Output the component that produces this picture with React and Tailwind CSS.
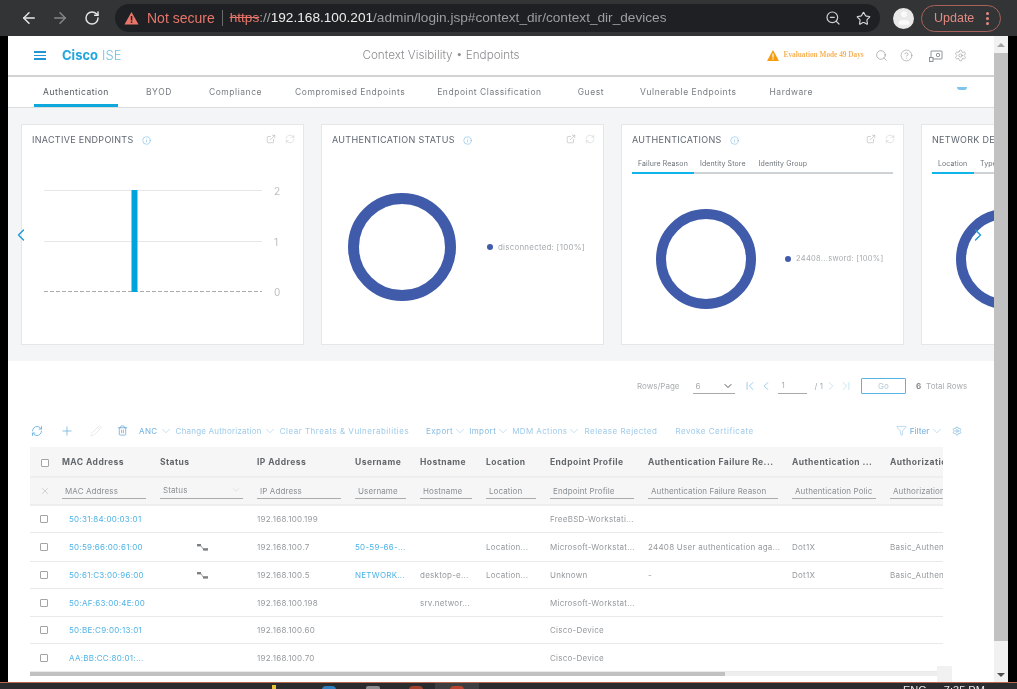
import React from "react";
import { ArrowLeft, ArrowRight, RotateCw, ZoomOut, Star, Search, CircleHelp, Settings, ChevronLeft, ChevronRight, ChevronDown, RefreshCw, Plus, Pencil, Trash2, Filter, X, ExternalLink, ChevronFirst, ChevronLast, Info, User } from "lucide-react";

const font = "font-['Inter','Liberation_Sans',sans-serif]";
const tabs = [["Authentication", ""], ["BYOD", "ml-[28px]"], ["Compliance", "ml-[37px]"], ["Compromised Endpoints", "ml-[33px]"], ["Endpoint Classification", "ml-[32px]"], ["Guest", "ml-[36px]"], ["Vulnerable Endpoints", "ml-[36px]"], ["Hardware", "ml-[33px]"]];
const grid = "grid grid-cols-[32px_98px_97px_98px_65px_66px_64px_98px_144px_98px_53px]";
const heads = ["MAC Address", "Status", "IP Address", "Username", "Hostname", "Location", "Endpoint Profile", "Authentication Failure Re...", "Authentication ...", "Authorizatio"];
const filters = ["MAC Address", "Status", "IP Address", "Username", "Hostname", "Location", "Endpoint Profile", "Authentication Failure Reason", "Authentication Polic", "Authorization"];
const rows = [
  { h: "h-[27px]", c: ["50:31:84:00:03:01", "", "192.168.100.199", "", "", "", "FreeBSD-Workstati...", "", "", ""] },
  { h: "h-[29px]", s: true, c: ["50:59:66:00:61:00", "", "192.168.100.7", "50-59-66-...", "", "Location...", "Microsoft-Workstat...", "24408 User authentication aga...", "Dot1X", "Basic_Authen"] },
  { h: "h-[27px]", s: true, c: ["50:61:C3:00:96:00", "", "192.168.100.5", "NETWORK...", "desktop-e...", "Location...", "Unknown", "-", "Dot1X", "Basic_Authen"] },
  { h: "h-[28px]", c: ["50:AF:63:00:4E:00", "", "192.168.100.198", "", "srv.networ...", "", "Microsoft-Workstat...", "", "", ""] },
  { h: "h-[27px]", c: ["50:BE:C9:00:13:01", "", "192.168.100.60", "", "", "", "Cisco-Device", "", "", ""] },
  { h: "h-[28px]", c: ["AA:BB:CC:80:01:...", "", "192.168.100.70", "", "", "", "Cisco-Device", "", "", ""] },
];

function Box() {
  return <span className="block w-[8px] h-[8px] border border-[#a4a4a4] rounded-[1px] bg-white" />;
}

function Donut({ size, sw = 11 }) {
  const r = size / 2 - sw / 2;
  return (
    <svg width={size} height={size} className="shrink-0">
      <circle cx={size / 2} cy={size / 2} r={r} fill="none" stroke="#3f5ba9" strokeWidth={sw} />
    </svg>
  );
}

function CardHead({ title, icons = true }) {
  return (
    <div className="flex items-center h-[14px] pl-[10px] pr-[8px]">
      <span className="text-[9px] tracking-[0.3px] text-[#5f6670] whitespace-nowrap">{title}</span>
      <Info size={9} strokeWidth={1.4} className="ml-[8px] text-[#6bb4e4] shrink-0" />
      {icons && (
        <div className="ml-auto flex items-center gap-[9px] text-[#a9adb1] -mt-[2px]">
          <ExternalLink size={10} strokeWidth={1.3} />
          <RefreshCw size={10} strokeWidth={1.2} className="text-[#c4c8cb]" />
        </div>
      )}
    </div>
  );
}

function SubTabs({ items, firstW }) {
  return (
    <div className="mx-[10px] mt-[7px] flex h-[20px] border-b-2 border-[#cfd2d4] text-[7px] text-[#6c7278] tracking-[0.1px] whitespace-nowrap">
      {items.map((t, i) => (
        <span key={t} className={i === 0 ? "h-[20px] pl-[6px] pt-[5px] border-b-2 border-[#0fb4e8] " + firstW : "pl-[6px] pr-[7px] pt-[5px]"}>{t}</span>
      ))}
    </div>
  );
}

export default function App() {
  return (
    <div className={"w-[1017px] h-[689px] bg-black overflow-hidden flex flex-col relative blur-[0.45px] " + font}>
      {/* browser chrome */}
      <div className="h-[36px] shrink-0 bg-[#333436] flex items-center pl-[20px] text-[#e6e6e6]">
        <ArrowLeft size={18} strokeWidth={2} />
        <ArrowRight size={18} strokeWidth={2} className="ml-[13px] text-[#85878a]" />
        <RotateCw size={16} strokeWidth={2.2} className="ml-[15px]" />
        <div className="ml-[15px] w-[765px] h-[28px] rounded-full bg-[#1f2023] flex items-center pl-[9px] pr-[9px] font-['Liberation_Sans',sans-serif] text-[13.65px] whitespace-nowrap">
          <svg width="15" height="14" viewBox="0 0 15 14"><path d="M7.5 1 14.5 13.5H.5Z" fill="#e8756a" /><rect x="6.8" y="5" width="1.5" height="4.5" fill="#1f2023" /><rect x="6.8" y="10.4" width="1.5" height="1.5" fill="#1f2023" /></svg>
          <span className="ml-[8px] text-[#e8756a] text-[14px]">Not secure</span>
          <span className="ml-[7px] w-px h-[16px] bg-[#6a6b6e]" />
          <span className="ml-[7px] text-[#e8756a] line-through">https</span>
          <span className="text-[#a0a2a5]">://</span>
          <span className="text-[#ececec]">192.168.100.201</span>
          <span className="text-[#9c9ea1]">/admin/login.jsp#context_dir/context_dir_devices</span>
          <ZoomOut size={16} strokeWidth={1.8} className="ml-auto text-[#d0d1d2]" />
          <Star size={15} strokeWidth={1.8} className="ml-[15px] text-[#d8d9da]" />
        </div>
        <div className="ml-[13px] w-[21px] h-[21px] rounded-full bg-[#e9e9e9] flex items-center justify-center overflow-hidden"><User size={18} fill="#fafafa" strokeWidth={0} /></div>
        <div className="ml-[7px] w-[80px] h-[27px] rounded-full border border-[#a9625b] flex items-center pl-[12px] pr-[11px] text-[#e58a80] font-['Liberation_Sans',sans-serif] text-[12.5px]">
          Update
          <span className="ml-auto flex flex-col gap-[2px]"><i className="block w-[3px] h-[3px] rounded-full bg-[#e58a80]" /><i className="block w-[3px] h-[3px] rounded-full bg-[#e58a80]" /><i className="block w-[3px] h-[3px] rounded-full bg-[#e58a80]" /></span>
        </div>
      </div>

      <div className="flex flex-1 min-h-0 pl-[8px]">
        {/* page */}
        <div className="w-[986px] shrink-0 bg-white flex flex-col overflow-hidden">
          {/* header */}
          <div className="h-[41px] shrink-0 border-b-2 border-[#d3d3d3] flex items-center relative text-[#8d8f92]">
            <span className="ml-[26px] flex flex-col gap-[2px]"><i className="block w-[12px] h-[1.5px] bg-[#1e96d5]" /><i className="block w-[12px] h-[1.5px] bg-[#1e96d5]" /><i className="block w-[12px] h-[1.5px] bg-[#1e96d5]" /></span>
            <span className="ml-[16px] text-[13px] text-[#23a6de] font-bold">Cisco</span>
            <span className="ml-[4px] text-[13px] text-[#6fc0e6] font-light">ISE</span>
            <span className="ml-[241px] text-[11.7px] font-light text-[#8b8d90] whitespace-nowrap">Context Visibility • Endpoints</span>
            <svg width="12" height="11" viewBox="0 0 12 11" className="ml-[247px]"><path d="M6 0 12 11H0Z" fill="#f59b0e" /><rect x="5.4" y="3.6" width="1.2" height="4" fill="#fff" /><rect x="5.4" y="8.4" width="1.2" height="1.2" fill="#fff" /></svg>
            <span className="ml-[5px] font-['Liberation_Serif',serif] font-bold text-[7.3px] text-[#f7b35a] whitespace-nowrap">Evaluation Mode 49 Days</span>
            <Search size={13} strokeWidth={1.1} className="ml-[11px] text-[#85888b]" />
            <CircleHelp size={13} strokeWidth={1} className="ml-[12px] text-[#85888b]" />
            <svg width="14" height="12" viewBox="0 0 14 12" fill="none" stroke="#85888b" strokeWidth="0.9" className="ml-[16px]"><rect x="2" y="1" width="11" height="8" rx="0.5" /><rect x="0.5" y="7.5" width="3.5" height="4" fill="#fff" /><circle cx="9" cy="5" r="1.7" /></svg>
            <Settings size={13} strokeWidth={1} className="ml-[11px] text-[#85888b]" />
          </div>
          {/* tabs */}
          <div className="h-[31px] shrink-0 border-b border-[#dcdddf] flex items-end text-[8.5px] tracking-[0.55px] text-[#787c81] relative whitespace-nowrap">
            {tabs.map(([t, c], i) => (
              <span key={t} className={i === 0 ? "h-[30px] pt-[3px] flex items-center justify-center w-[84px] ml-[26px] border-b-[3px] border-[#0fa8dc] text-[#555a60]" : "h-[30px] pt-[1px] flex items-center " + c}>{t}</span>
            ))}
            <span className="absolute right-[27px] top-[10px] w-[10px] h-[3px] bg-[#7cc4ea] rounded-b-full" />
          </div>
          {/* dashlets */}
          <div className="h-[253px] shrink-0 bg-[#f4f5f6] pt-[16px] relative overflow-hidden">
            <div className="flex gap-[17px] pl-[13px] w-[1200px]">
              <div className="w-[283px] h-[221px] shrink-0 bg-white border border-[#e5e6e8] pt-[8px]">
                <CardHead title="INACTIVE ENDPOINTS" />
                <svg width="281" height="190" className="block mt-[-2px] font-['Inter',sans-serif]">
                  <line x1="22" x2="240" y1="45.5" y2="45.5" stroke="#e6e7e8" />
                  <line x1="22" x2="240" y1="96.5" y2="96.5" stroke="#e6e7e8" />
                  <line x1="22" x2="240" y1="146.5" y2="146.5" stroke="#a9abad" strokeDasharray="4 2" />
                  <rect x="109.5" y="45" width="6" height="102" fill="#00a4dc" />
                  <text x="252" y="49.5" fontSize="10" fill="#bcbec0">2</text>
                  <text x="252" y="100.5" fontSize="10" fill="#bcbec0">1</text>
                  <text x="252" y="150.5" fontSize="10" fill="#bcbec0">0</text>
                </svg>
              </div>
              <div className="w-[283px] h-[221px] shrink-0 bg-white border border-[#e5e6e8] pt-[8px]">
                <CardHead title="AUTHENTICATION STATUS" />
                <div className="flex items-center pl-[26px] pt-[46px]">
                  <Donut size={108} />
                  <span className="ml-[31px] w-[6px] h-[6px] rounded-full bg-[#3f5ba9]" />
                  <span className="ml-[5px] text-[8px] tracking-[0.2px] text-[#a7abaf] whitespace-nowrap">disconnected: [100%]</span>
                </div>
              </div>
              <div className="w-[283px] h-[221px] shrink-0 bg-white border border-[#e5e6e8] pt-[8px]">
                <CardHead title="AUTHENTICATIONS" />
                <SubTabs items={["Failure Reason", "Identity Store", "Identity Group"]} firstW="w-[62px]" />
                <div className="flex items-center pl-[34px] pt-[35px]">
                  <Donut size={100} sw={10} />
                  <span className="ml-[29px] w-[6px] h-[6px] rounded-full bg-[#3f5ba9]" />
                  <span className="ml-[5px] text-[7.5px] tracking-[0.3px] text-[#a7abaf] whitespace-nowrap">24408...sword: [100%]</span>
                </div>
              </div>
              <div className="w-[283px] h-[221px] shrink-0 bg-white border border-[#e5e6e8] pt-[8px]">
                <CardHead title="NETWORK DEVICES" icons={false} />
                <SubTabs items={["Location", "Type", "Software"]} firstW="w-[42px]" />
                <div className="flex items-center pl-[34px] pt-[35px]">
                  <Donut size={100} sw={10} />
                </div>
              </div>
            </div>
            <ChevronLeft size={20} strokeWidth={1.6} className="absolute left-[3px] top-[117px] text-[#1b9ad6]" />
            <ChevronRight size={20} strokeWidth={1.6} className="absolute left-[960px] top-[117px] text-[#1b9ad6]" />
          </div>

          {/* pager */}
          <div className="h-[50px] shrink-0 flex items-center pl-[629px] text-[8px] text-[#a9acaf] whitespace-nowrap">
            <span>Rows/Page</span>
            <span className="ml-[13px] w-[42px] h-[15px] border-b border-[#a7a9ab] flex items-center pl-[3px] pr-[1px]">6<ChevronDown size={12} strokeWidth={2} className="ml-auto text-[#555]" /></span>
            <ChevronFirst size={14} strokeWidth={1.3} className="ml-[8px] text-[#7cbde6]" />
            <ChevronLeft size={14} strokeWidth={1.3} className="ml-[2px] text-[#7cbde6]" />
            <span className="ml-[5px] w-[29px] h-[15px] border-b border-[#a7a9ab] pl-[4px] leading-[12px]">1</span>
            <span className="ml-[8px]">/ 1</span>
            <ChevronRight size={14} strokeWidth={1.3} className="ml-[1px] text-[#b9dcf2]" />
            <ChevronLast size={14} strokeWidth={1.3} className="ml-[1px] text-[#b9dcf2]" />
            <span className="ml-[8px] w-[45px] h-[16px] border border-[#55b4e4] rounded-[1px] flex items-center justify-center text-[#b5c9d6]">Go</span>
            <b className="ml-[10px] text-[#83868a]">6</b><span className="ml-[5px]">Total Rows</span>
          </div>

          {/* toolbar */}
          <div className="h-[36px] shrink-0 flex items-center pl-[23px] pt-[3px] text-[8px] tracking-[0.4px] text-[#9dcbea] whitespace-nowrap">
            <RefreshCw size={12} strokeWidth={1.6} className="text-[#5aa9de]" />
            <Plus size={14} strokeWidth={1.2} className="ml-[17px] text-[#5aa9de]" />
            <Pencil size={12} strokeWidth={1} className="ml-[16px] text-[#d5d8da]" />
            <Trash2 size={11} strokeWidth={1.5} className="ml-[15px] text-[#5b9fd0]" />
            <span className="ml-[11px] text-[#6fb0de]">ANC</span>
            <ChevronDown size={14} strokeWidth={1} className="ml-[1px]" />
            <span className="ml-[3px] tracking-[0.2px]">Change Authorization</span>
            <ChevronDown size={14} strokeWidth={1} className="ml-[1px]" />
            <span className="ml-[3px] tracking-[0.5px]">Clear Threats &amp; Vulnerabilities</span>
            <span className="ml-[17px] text-[#86bbe2]">Export</span>
            <ChevronDown size={14} strokeWidth={1} />
            <span className="ml-[2px] text-[#86bbe2]">Import</span>
            <ChevronDown size={14} strokeWidth={1} />
            <span className="ml-[2px]">MDM Actions</span>
            <ChevronDown size={14} strokeWidth={1} />
            <span className="ml-[3px] tracking-[0.5px]">Release Rejected</span>
            <span className="ml-[18px] tracking-[0.5px]">Revoke Certificate</span>
            <Filter size={11} strokeWidth={1} className="ml-[142px] text-[#6fb0de]" />
            <span className="ml-[3px] font-semibold text-[#8dbfe4] tracking-normal">Filter</span>
            <ChevronDown size={14} strokeWidth={1} className="ml-[1px]" />
            <Settings size={10} strokeWidth={2} className="ml-[8px] text-[#8dbfe4]" />
          </div>

          {/* table */}
          <div className="ml-[22px] w-[913px] shrink-0 overflow-hidden text-[8px] whitespace-nowrap">
            <div className={grid + " h-[31px] pt-[2px] items-center bg-[#f6f6f6] border-b-2 border-[#eeeeee] text-[8.5px] font-bold tracking-[0.45px] text-[#62676c]"}>
              <span className="pl-[11px]"><Box /></span>
              {heads.map((h) => <span key={h} className="overflow-hidden">{h}</span>)}
            </div>
            <div className={grid + " h-[28px] items-center bg-[#f6f6f6] border-b-2 border-[#eeeeee] text-[#8b8f93] tracking-[0.1px]"}>
              <span className="pl-[10px]"><X size={10} strokeWidth={1} className="text-[#9a9da0]" /></span>
              {filters.map((f, i) => (
                <span key={f} className={"h-[16px] border-b border-[#a9abad] flex items-center pl-[3px] overflow-hidden " + (i === 9 ? "" : "mr-[14px] ") + (i === 1 ? "justify-between pr-[2px] -mt-[1px]" : "")}>
                  {f}{i === 1 && <ChevronDown size={10} strokeWidth={1} className="text-[#c2c4c6]" />}
                </span>
              ))}
            </div>
            {rows.map((r, n) => (
              <div key={n} className={grid + " " + r.h + " items-center border-b border-[#e8e9ea] text-[#95999d] tracking-[0.25px]"}>
                <span className="pl-[10px]"><Box /></span>
                {r.c.map((c, i) => (
                  <span key={i} className={(i === 0 ? "pl-[7px] text-[#4fb3e6] " : "") + (i === 3 ? "text-[#4fb3e6] " : "") + "overflow-hidden"}>
                    {i === 1 && r.s ? (
                      <svg width="11" height="7" viewBox="0 0 11 7" className="ml-[37px]"><rect x="0" y="0" width="4" height="2.4" fill="#7d8083" /><path d="M4 1.5 6 5" stroke="#a5a7a9" strokeWidth="1" fill="none" /><rect x="6" y="4.2" width="5" height="2.4" fill="#7d8083" /></svg>
                    ) : c}
                  </span>
                ))}
              </div>
            ))}
          </div>
          {/* horizontal scrollbar */}
          <div className="ml-[22px] w-[913px] h-[4px] shrink-0 bg-[#eeeeee]"><div className="w-[695px] h-[4px] bg-[#c1c1c1]" /></div>
        </div>

        {/* page scrollbar */}
        <div className="w-[14px] shrink-0 bg-[#f1f1f1] flex flex-col items-center">
          <div className="h-[17px] shrink-0 flex items-center justify-center"><span className="border-x-[4px] border-x-transparent border-b-[4px] border-b-[#a3a3a3]" /></div>
          <div className="w-[14px] h-[588px] bg-[#c1c1c1]" />
          <div className="mt-auto h-[14px] shrink-0 flex items-center justify-center"><span className="border-x-[4px] border-x-transparent border-t-[4px] border-t-[#505050]" /></div>
        </div>
      </div>

      {/* corner square of the inner scroll area */}
      <div className="absolute left-[937px] top-[666px] w-[15px] h-[16px] bg-[#f1f1f1]" />

      {/* taskbar */}
      <div className="h-[7px] shrink-0 bg-[#2a2b2d] border-t border-[#b8674e] flex items-start overflow-hidden text-[11px] leading-[14px] text-[#e8e8e8] font-['Liberation_Sans',sans-serif]">
        <i className="block ml-[272px] mt-[2px] w-[4px] h-[4px] bg-[#e8c33a]" />
        <i className="block ml-[46px] mt-[3px] w-[14px] h-[4px] rounded-t-full bg-[#2f7fc0]" />
        <i className="block ml-[30px] mt-[3px] w-[14px] h-[4px] rounded-t-[2px] bg-[#8a8c8e]" />
        <i className="block ml-[29px] mt-[3px] w-[14px] h-[4px] rounded-t-full bg-[#a0402e]" />
        <span className="block ml-[12px] w-[44px] h-[7px] bg-[#3d3e40] pl-[15px] pt-[3px]"><i className="block w-[14px] h-[4px] rounded-t-full bg-[#b9432f]" /></span>
        <span className="ml-[424px]">ENG</span><span className="ml-[17px]">7:35 PM</span>
      </div>
    </div>
  );
}
